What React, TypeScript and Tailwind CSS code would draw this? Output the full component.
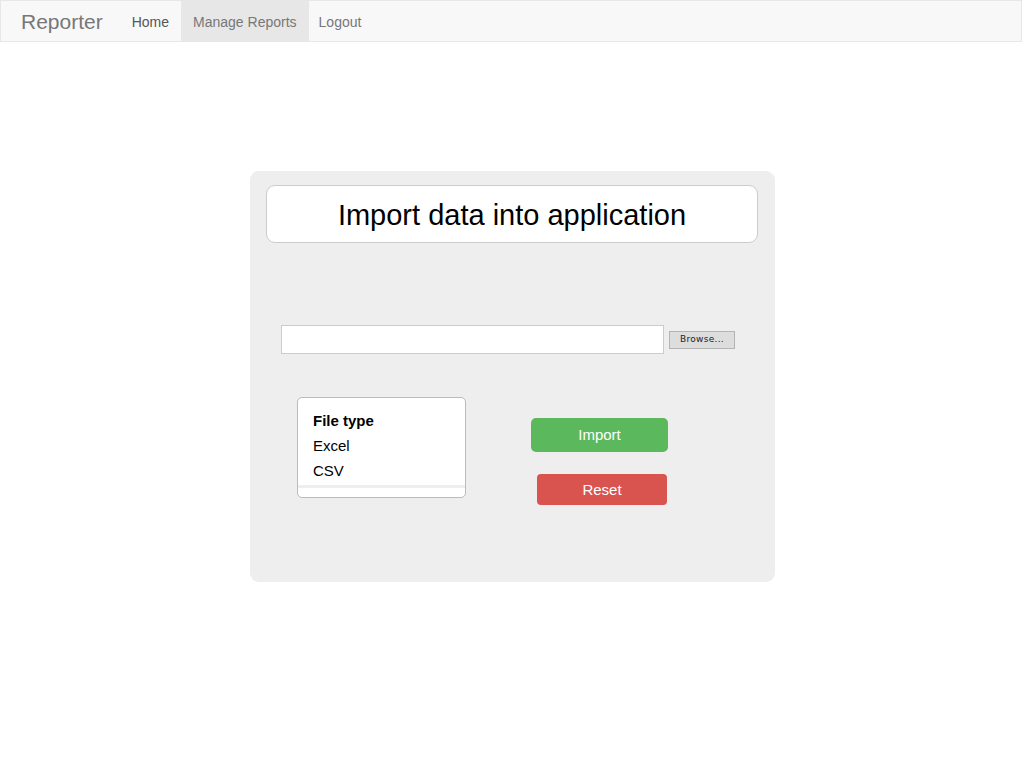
export default function App() {
  return (
    <div className="min-h-[768px] bg-white font-['Liberation_Sans',Arial,sans-serif]">
      {/* Navbar */}
      <nav className="flex h-[42px] w-[1022px] items-stretch border border-[#e7e7e7] bg-[#f8f8f8]">
        <a className="flex items-center pl-[20px] pr-[17px] pt-[2px] text-[21px] text-[#777]">Reporter</a>
        <a className="flex items-center px-[12px] pt-[2px] text-[14px] text-[#555]">Home</a>
        <a className="flex items-center bg-[#e7e7e7] px-[12px] pt-[2px] text-[14px] text-[#777]">Manage Reports</a>
        <a className="flex items-center px-[10px] pt-[2px] text-[14px] text-[#777]">Logout</a>
      </nav>

      {/* Import card */}
      <div className="ml-[250px] mt-[129px] h-[411px] w-[525px] rounded-[9px] bg-[#eeeeee] pl-[16px] pr-[17px] pt-[14px]">
        <div className="flex h-[58px] items-center justify-center rounded-[9px] border border-[#cccccc] bg-white pt-[3px]">
          <h1 className="text-[29px] text-black">Import data into application</h1>
        </div>

        {/* File picker */}
        <div className="mt-[82px] flex items-center pl-[15px]">
          <div className="h-[29px] w-[383px] border border-[#cccccc] bg-white" />
          <button className="ml-[5px] flex h-[18px] w-[66px] items-center justify-center border border-[#b4b4b4] bg-[#dddddd] pt-[1px] font-['DejaVu_Sans',sans-serif] text-[9px] tracking-[0.3px] text-[#222]">
            Browse...
          </button>
        </div>

        <div className="mt-[43px] flex pl-[31px]">
          {/* File type list */}
          <div className="h-[101px] w-[169px] overflow-hidden rounded-[5px] border border-[#bbbbbb] bg-white pt-[11px]">
            <div className="flex h-[25px] items-center pl-[15px] text-[15px] font-bold text-black">File type</div>
            <div className="flex h-[25px] items-center pl-[15px] text-[15px] text-black">Excel</div>
            <div className="flex h-[25px] items-center pl-[15px] text-[15px] text-black">CSV</div>
            <div className="mt-[1px] h-[3px] bg-[#eeeeee]" />
          </div>

          {/* Actions */}
          <div className="ml-[65px] mt-[21px] flex flex-col items-start">
            <button className="flex h-[34px] w-[137px] items-center justify-center rounded-[5px] bg-[#5cb85c] text-[15px] text-white">
              Import
            </button>
            <button className="ml-[6px] mt-[22px] flex h-[31px] w-[130px] items-center justify-center rounded-[4px] bg-[#d9534f] pt-[1px] text-[15px] text-white">
              Reset
            </button>
          </div>
        </div>
      </div>
    </div>
  );
}
